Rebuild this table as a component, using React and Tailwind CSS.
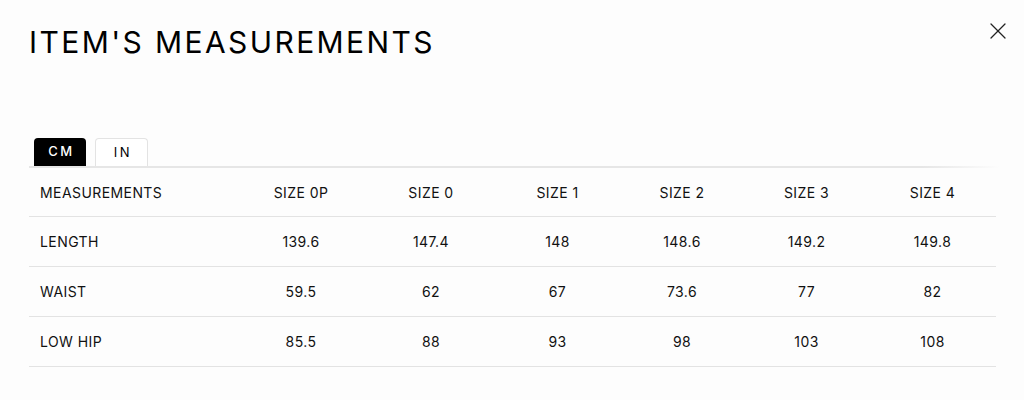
import { X } from "lucide-react"

const sizes = ["SIZE 0P", "SIZE 0", "SIZE 1", "SIZE 2", "SIZE 3", "SIZE 4"]

const filas = [
  { nombre: "LENGTH", valores: ["139.6", "147.4", "148", "148.6", "149.2", "149.8"] },
  { nombre: "WAIST", valores: ["59.5", "62", "67", "73.6", "77", "82"] },
  { nombre: "LOW HIP", valores: ["85.5", "88", "93", "98", "103", "108"] },
]

const cols = "grid grid-cols-[206px_132px_128px_125px_124px_125px_127px]"

const Fila = ({ nombre, valores }) => (
  <div className={`${cols} h-[50px] items-center border-b border-[#e3e3e3] text-[14px] tracking-[0.03em] text-[#111]`}>
    <div className="pl-[11px]">{nombre}</div>
    {valores.map((v, i) => (
      <div key={i} className="text-center">
        {v}
      </div>
    ))}
  </div>
)

export default function App() {
  return (
    <div
      className="relative w-[1024px] h-[400px] bg-[#fdfdfd] overflow-hidden"
      style={{ fontFamily: "Inter, 'Liberation Sans', sans-serif" }}
    >
      {/* Cerrar */}
      <button className="absolute top-[17px] right-[12px] text-[#222]">
        <X size={28} strokeWidth={1.1} />
      </button>

      <div className="pl-[29px] pt-[23px]">
        <h1 className="text-[30px] leading-[38px] tracking-[0.08em] font-normal text-black">
          ITEM'S MEASUREMENTS
        </h1>

        {/* Tabs */}
        <div className="flex gap-[9px] pl-[5px] mt-[77px]">
          <button className="w-[52px] h-[28px] bg-black text-white rounded-t-[4px] text-[13px] font-medium tracking-[0.2em] pl-[3px]">
            CM
          </button>
          <button className="w-[53px] h-[28px] bg-white text-black border border-b-0 border-[#e3e3e3] rounded-t-[4px] text-[13px] font-normal tracking-[0.2em] pl-[3px]">
            IN
          </button>
        </div>

        <div className="w-[971px] h-[2px] bg-gradient-to-r from-[#e6e6e6] from-[92%] to-transparent" />

        <div className="w-[967px]">
          <div className={`${cols} h-[49px] items-center border-b border-[#e3e3e3] text-[14px] tracking-[0.03em] text-[#111]`}>
            <div className="pl-[11px]">MEASUREMENTS</div>
            {sizes.map((s) => (
              <div key={s} className="text-center">
                {s}
              </div>
            ))}
          </div>
          {filas.map((f) => (
            <Fila key={f.nombre} {...f} />
          ))}
        </div>
      </div>
    </div>
  )
}
